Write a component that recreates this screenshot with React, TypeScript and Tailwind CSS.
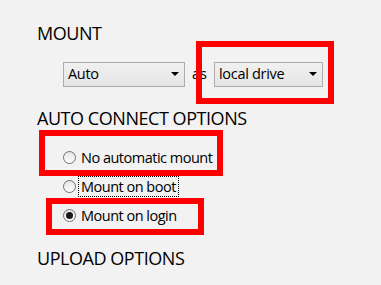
import React from "react";

function Select({ label, width }: { label: string; width: string }) {
  return (
    <div
      className={`${width} h-[25px] flex items-center justify-between pl-[4px] pr-[5px] border border-[#acacac] bg-gradient-to-b from-[#f0f0f0] to-[#e5e5e5] text-[14.5px] tracking-[-0.3px] text-black`}
    >
      <span className="leading-none">{label}</span>
      <svg width="8" height="4" viewBox="0 0 8 4" className="mb-[1px]">
        <path d="M0 0 H8 L4 4 Z" fill="#000" />
      </svg>
    </div>
  );
}

function Radio({ label, checked, focus }: { label: string; checked?: boolean; focus?: boolean }) {
  return (
    <div className="flex items-center h-[21px]">
      <div className="w-[13px] h-[13px] rounded-full border border-[#707070] bg-gradient-to-b from-[#e6e6e6] to-[#ffffff] flex items-center justify-center">
        {checked && <div className="w-[7px] h-[7px] rounded-full bg-[#1a1a1a]" />}
      </div>
      <span
        className={`ml-[3px] px-[2px] text-[14.5px] tracking-[-0.5px] leading-[19px] text-black ${focus ? "outline outline-1 outline-dotted outline-black" : ""}`}
      >
        {label}
      </span>
    </div>
  );
}

export default function App() {
  return (
    <div
      className="relative w-[381px] h-[285px] bg-[#f2f2f2] overflow-hidden"
      style={{ fontFamily: '"Open Sans", "Noto Sans", sans-serif' }}
    >
      <div className="flex flex-col pl-[37px] pt-[21px]">
        <div className="text-[18px] tracking-[-0.45px] leading-[24px] text-[#000]">MOUNT</div>
        <div className="flex items-center ml-[26px] mt-[17px] gap-[7px]">
          <Select label="Auto" width="w-[122px]" />
          <span className="text-[14.5px] text-black leading-none">as</span>
          <Select label="local drive" width="w-[109px]" />
        </div>
        <div className="text-[18px] tracking-[-0.45px] leading-[24px] text-[#000] mt-[19px]">AUTO CONNECT OPTIONS</div>
        <div className="flex flex-col ml-[26px] mt-[17px] gap-[8px]">
          <Radio label="No automatic mount" />
          <Radio label="Mount on boot" focus />
          <Radio label="Mount on login" checked />
        </div>
        <div className="text-[18px] tracking-[-0.45px] leading-[24px] text-[#000] mt-[20px]">UPLOAD OPTIONS</div>
      </div>

      <div className="absolute left-[196px] top-[41px] w-[138px] h-[63px] border-[6px] border-[#ff0000]" />
      <div className="absolute left-[39px] top-[130px] w-[184px] h-[46px] border-[6px] border-[#ff0000]" />
      <div className="absolute left-[46px] top-[198px] w-[158px] h-[37px] border-[6px] border-[#ff0000]" />
    </div>
  );
}
